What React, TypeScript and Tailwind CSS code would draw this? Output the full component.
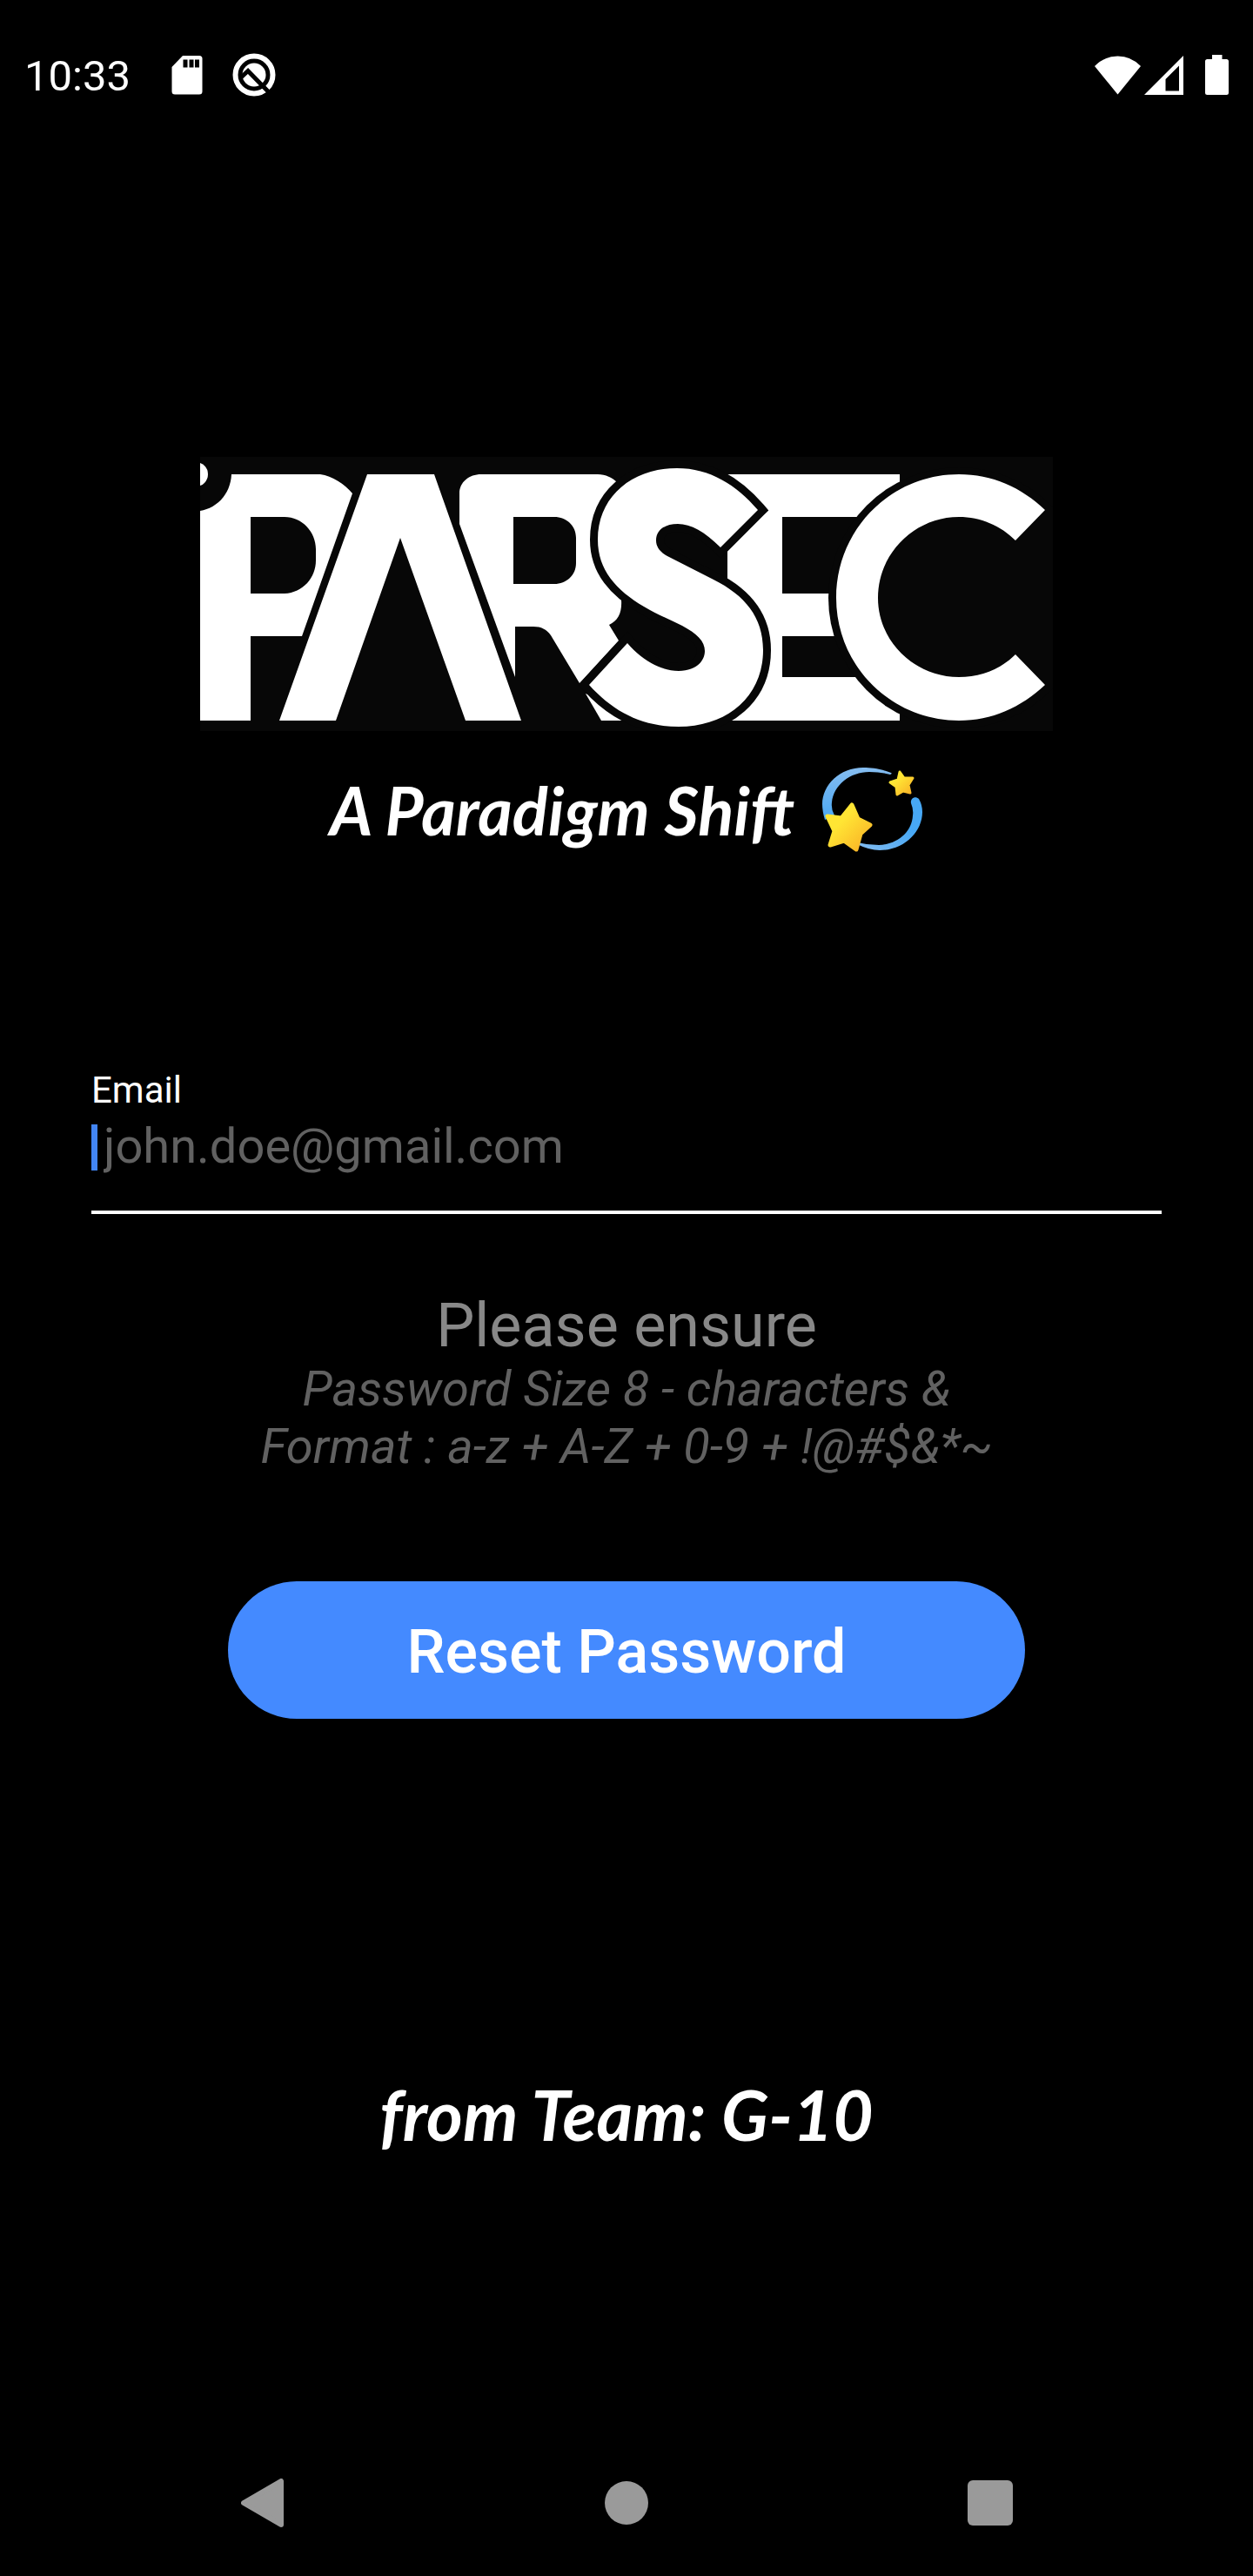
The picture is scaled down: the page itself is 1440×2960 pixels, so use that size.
function SdCardIcon() {
  return (
    <svg viewBox="0 0 36 46" className="h-[46px] w-9" aria-hidden="true">
      <path d="M13 1H32Q35.500 1 35.500 4.500V42Q35.500 45.500 32 45.500H4Q.5 45.500 .5 42V14Z" fill="#fff" />
      <path d="M13.500 5.500h5v9h-5zM20.500 5.500h5v9h-5zM27 5.500h5v9h-5z" fill="#000" />
    </svg>
  );
}

function QIcon() {
  return (
    <svg viewBox="0 0 50 50" className="size-[50px]" aria-hidden="true">
      <circle cx="25" cy="25" r="21.500" fill="none" stroke="#fff" strokeWidth="6" />
      <circle cx="25" cy="25" r="13.500" fill="#fff" />
      <path d="M10 28 18 20.500 43 46" fill="none" stroke="#000" strokeWidth="5" />
    </svg>
  );
}

function StatusBar() {
  return (
    <header className="flex h-[172px] items-center justify-between pl-7 pr-7 text-white">
      <div className="flex items-center">
        <time className="pt-1 text-[49px] leading-[58px]">10:33</time>
        <span className="ml-[47px]"><SdCardIcon /></span>
        <span className="ml-[34px]"><QIcon /></span>
      </div>
      <div className="flex items-center">
        <svg viewBox="0 0 53 45" className="h-[45px] w-[53px]" aria-hidden="true">
          <path d="M0 12Q11 .5 26.500 .5T53 12L26.500 44.500Z" fill="#fff" />
        </svg>
        <svg viewBox="0 0 45 45" className="ml-1 h-[45px] w-[45px]" aria-hidden="true">
          <path fillRule="evenodd" d="M0 45 45 0V45ZM24.500 27V40.500H40V11.500Z" fill="#fff" />
        </svg>
        <svg viewBox="0 0 27 46" className="ml-[25px] h-[46px] w-[27px]" aria-hidden="true">
          <path d="M8 0H19.500V5H24.500Q27 5 27 7.500V43.500Q27 46 24.500 46H2.500Q0 46 0 43.500V7.500Q0 5 2.500 5H8Z" fill="#fff" />
        </svg>
      </div>
    </header>
  );
}

function ParsecLogo() {
  return (
    <svg viewBox="0 0 980 315" role="img" aria-label="Parsec" className="w-[68.056%]">
      <rect width="980" height="315" fill="#070707" />
      <g fill="#fff">
        <circle cx="-5" cy="20" r="14" />
        <path
          fillRule="evenodd"
          d="M36 20H138C152 22 166 31 175 42L117 206H58V303H0V62C19 59 35 43 36 20ZM58 69V157H97C118 156 133 139 133 119V106C133 86 117 69 97 69Z"
        />
        <path d="M192 20H269L369 303H305L230 93 156 303H91Z" />
        <path
          fillRule="evenodd"
          d="M298 77V42C298 29 309 20 323 20H457C466 20 474 24 479 29L500 60V150L484 164C485 178 481 188 470 193L481 211 436 260 403 205C398 198 392 195 383 195H362V253ZM360 69V146H407C421 146 432 136 432 122V93C432 79 421 69 407 69Z"
        />
        <path d="M443 272 461 303H490V290Z" />
        <path fillRule="evenodd" d="M606 20H804V303H606ZM669 69V157H804V69ZM669 206V253H804V206Z" />
        <path
          stroke="#070707"
          strokeWidth="18"
          paintOrder="stroke"
          strokeMiterlimit="6"
          d="M641 61 598 104C580 86 564 77 549 77C534 77 524 84 524 96C524 103 528 109 537 114L590 141C626 159 647 184 647 222C647 275 606 310 550 310C508 310 475 293 447 262L491 214C508 234 530 246 550 246C568 246 580 236 580 223C580 212 571 203 554 194C540 187 525 181 510 172C478 153 457 130 457 95C457 46 496 13 548 13C586 13 616 32 641 61Z"
        />
      </g>
      <circle cx="872" cy="162" r="150" fill="#070707" />
      <path
        fill="#fff"
        d="M971 61 937 96C920 79 897 69 872 69C821 69 779 111 779 162C779 212 821 253 872 253C897 253 920 244 937 227L971 262C943 288 910 303 872 303C794 303 731 240 731 162C731 83 794 20 872 20C910 20 944 35 971 61Z"
      />
    </svg>
  );
}

function DizzyIcon() {
  return (
    <svg viewBox="0 0 116 98" className="h-[98px] w-[116px] overflow-visible" role="img" aria-label="dizzy">
      <defs>
        <linearGradient id="ringLeft" x1="0" y1="0" x2="0" y2="1">
          <stop offset="0" stopColor="#86bdf0" />
          <stop offset="1" stopColor="#4aa8f4" />
        </linearGradient>
        <linearGradient id="ringRight" x1="1" y1="0" x2="0" y2="1">
          <stop offset="0.400" stopColor="#47a8f5" />
          <stop offset="1" stopColor="#86bdf0" />
        </linearGradient>
        <linearGradient id="starFill" x1="0" y1="0" x2="1" y2="1">
          <stop offset="0.350" stopColor="#ffe534" />
          <stop offset="1" stopColor="#f9ae25" />
        </linearGradient>
      </defs>
      <path d="M79 6C66 1 57 0 47 0C20 0 0 20 0 42Q0 50 3 60L14 55Q10 48 11 40C13 20 32 5 54 5Q67 5 78 8Q81 7 79 6Z" fill="url(#ringLeft)" />
      <path d="M40 88Q54 95 66 95C94 95 115 74 115 51Q115 43 111 36C107 32 101 35 102 41Q105 48 104 55C103 74 87 88 65 89Q52 89 40 86Z" fill="url(#ringRight)" />
      <path d="M34 43 41 59 55 66 44 76 39 94 25 84 9 89 14 73 6 56 22 58Z" fill="url(#starFill)" stroke="url(#starFill)" strokeWidth="5" strokeLinejoin="round" />
      <path d="M89 5 94 12 104 12 99 20 101 29 93 27 86 31 85 22 78 17 87 14Z" fill="url(#starFill)" stroke="url(#starFill)" strokeWidth="3" strokeLinejoin="round" />
    </svg>
  );
}

function NavigationBar() {
  return (
    <nav aria-label="System" className="mt-auto grid grid-cols-3 px-[93px] pb-[56px]">
      <button type="button" aria-label="Back" className="flex h-[56px] items-center justify-center">
        <svg viewBox="0 0 50 56" className="h-[56px] w-[50px]" aria-hidden="true">
          <path d="M3 28 46 3V53Z" fill="#9a9a9a" stroke="#9a9a9a" strokeWidth="6" strokeLinejoin="round" />
        </svg>
      </button>
      <button type="button" aria-label="Home" className="flex h-[56px] items-center justify-center">
        <span className="size-[50px] rounded-full bg-[#9a9a9a]" />
      </button>
      <button type="button" aria-label="Recent apps" className="flex h-[56px] items-center justify-center">
        <span className="size-[52px] rounded-md bg-[#9a9a9a]" />
      </button>
    </nav>
  );
}

export default function App() {
  return (
    <div className="flex min-h-screen flex-col bg-black font-['Roboto',sans-serif]">
      <StatusBar />
      <main className="flex flex-col items-center pt-[353px]">
        <ParsecLogo />
        <div className="mt-[42px] flex items-center gap-8 text-white">
          <h1 className="whitespace-nowrap font-['Lato',cursive] text-[76px] font-bold italic leading-[98px]">A Paradigm Shift</h1>
          <DizzyIcon />
        </div>
        <form className="mt-[248px] flex w-full flex-col px-[105px]" onSubmit={(e) => e.preventDefault()}>
          <label htmlFor="email" className="text-[42px] leading-[50px] text-white">
            Email
          </label>
          <div className="relative border-b-4 border-white pb-9">
            <input
              id="email"
              type="email"
              placeholder="john.doe@gmail.com"
              className="block h-[77px] w-full bg-transparent pl-[14px] text-[56px] text-white caret-transparent outline-none placeholder:text-[#616161]"
            />
            <span className="absolute left-0 top-[14px] h-[53px] w-[7px] bg-[#4285f4]" />
          </div>
          <div className="mt-[88px] text-center text-[56px] italic leading-[66px] text-[#616161]">
            <p className="text-[70px] not-italic leading-[80px] text-[#888888]">Please ensure</p>
            <p>Password Size 8 - characters &amp;</p>
            <p>Format : a-z + A-Z + 0-9 + !@#$&amp;*~</p>
          </div>
          <button
            type="submit"
            className="mx-auto mt-[122px] h-[158px] w-[74.500%] rounded-full bg-[#448aff] pt-1 text-[70px] font-medium text-white"
          >
            Reset Password
          </button>
        </form>
        <p className="mt-[406px] font-['Lato',cursive] text-[80px] font-bold italic leading-[96px] text-white">from Team: G-10</p>
      </main>
      <NavigationBar />
    </div>
  );
}
